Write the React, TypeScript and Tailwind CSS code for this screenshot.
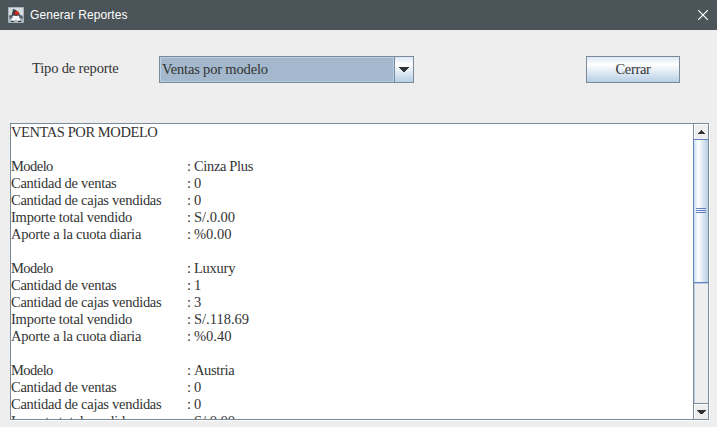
import React from 'react';

type Row = { label: string; value: string; labelClass: string; valueClass: string };

const L = {
  modelo: { label: 'Modelo', labelClass: 'tracking-[-0.55px]' },
  ventas: { label: 'Cantidad de ventas', labelClass: 'tracking-[-0.27px]' },
  cajas: { label: 'Cantidad de cajas vendidas', labelClass: 'tracking-[-0.27px]' },
  importe: { label: 'Importe total vendido', labelClass: 'tracking-[-0.22px]' },
  aporte: { label: 'Aporte a la cuota diaria', labelClass: 'tracking-[-0.25px]' },
};

const groups: Row[][] = [
  [
    { ...L.modelo, value: 'Cinza Plus', valueClass: 'tracking-[-0.35px]' },
    { ...L.ventas, value: '0', valueClass: '' },
    { ...L.cajas, value: '0', valueClass: '' },
    { ...L.importe, value: 'S/.0.00', valueClass: '' },
    { ...L.aporte, value: '%0.00', valueClass: '' },
  ],
  [
    { ...L.modelo, value: 'Luxury', valueClass: 'tracking-[-0.25px]' },
    { ...L.ventas, value: '1', valueClass: '' },
    { ...L.cajas, value: '3', valueClass: '' },
    { ...L.importe, value: 'S/.118.69', valueClass: '' },
    { ...L.aporte, value: '%0.40', valueClass: '' },
  ],
  [
    { ...L.modelo, value: 'Austria', valueClass: 'tracking-[-0.35px]' },
    { ...L.ventas, value: '0', valueClass: '' },
    { ...L.cajas, value: '0', valueClass: '' },
    { ...L.importe, value: 'S/.0.00', valueClass: '' },
  ],
];

function DukeIcon() {
  return (
    <svg width="16" height="16" viewBox="0 0 16 16">
      <rect width="16" height="16" rx="1" fill="#aab4bd" />
      <rect x="1" y="1" width="14" height="7" fill="#d3dae0" />
      <path d="M5 2 L8 3 L11 6 L12.5 9 L12 11 H4 L4 7 Z" fill="#3a4046" />
      <path d="M1 9 L4 7.5 L5 10 L2 12 Z M12 8 L15 9.5 L14.5 12 L12 11 Z" fill="#5c656d" />
      <path d="M5 8.5 L8 9 L11 8.5 L12 13 L10 14 L8 12.5 L5 14 L3.5 13 Z" fill="#f6f7f8" />
      <path d="M3 14 H6 V15 H3 Z M10 14 H13 V15 H10 Z" fill="#2a2f34" />
      <circle cx="8.7" cy="6" r="2.1" fill="#d8251d" />
    </svg>
  );
}

function Arrow({ up }: { up?: boolean }) {
  return (
    <svg width="9" height="4" viewBox="0 0 9 4" shapeRendering="crispEdges" fill="#333333">
      {up ? (
        <path d="M4 0h1v1h1v1h1v1h1v1H1V3h1V2h1V1h1z" />
      ) : (
        <path d="M0 0h9v1h-1v1h-1v1h-1v1H3V3H2V2H1V1H0z" />
      )}
    </svg>
  );
}

export default function App() {
  return (
    <div className="flex h-[427px] w-[717px] flex-col overflow-hidden bg-[#eeeeee] font-['Liberation_Serif',serif] text-[14.5px] leading-[17px] text-[#333333]">
      <header className="flex h-[30px] shrink-0 items-center bg-[#4b5459] pr-[9px] pl-2 font-['Liberation_Sans',sans-serif] text-[12px] text-white">
        <DukeIcon />
        <span className="ml-[6px] tracking-[0.1px]">Generar Reportes</span>
        <svg className="ml-auto" width="10" height="10" viewBox="0 0 10 10" stroke="#ffffff" strokeWidth="1.2">
          <path d="M0 0L10 10M10 0L0 10" />
        </svg>
      </header>

      <div className="flex h-[93px] shrink-0 items-start pr-[37px] pl-8 pt-[26px]">
        <label className="mt-[4px] w-[127px] whitespace-nowrap tracking-[-0.15px]">Tipo de reporte</label>
        <div className="flex h-[27px] w-[255px] border border-[#7a8a99]">
          <div className="flex flex-1 items-center border border-[#b8cfe5] bg-[#a3b8cc] pl-px tracking-[-0.17px]">
            Ventas por modelo
          </div>
          <div className="flex w-[19px] items-center justify-center border-l border-[#7a8a99] bg-linear-to-b from-[#dde8f3] via-white via-30% to-[#b8cfe5]">
            <svg width="10" height="5" viewBox="0 0 10 5" shapeRendering="crispEdges" fill="#333333">
              <path d="M0 0h10v1h-1v1h-1v1h-1v1h-1v1H4V4H3V3H2V2H1V1H0z" />
            </svg>
          </div>
        </div>
        <button className="ml-auto flex h-[27px] w-[94px] items-center justify-center border border-[#7a8a99] bg-linear-to-b from-[#dde8f3] via-white via-30% to-[#b8cfe5] tracking-[-0.3px]">
          Cerrar
        </button>
      </div>

      <div className="ml-[10px] h-[298px] w-[700px] border-r border-b border-white">
        <div className="flex h-[297px] border border-[#7a8a99] bg-white">
          <div className="h-[295px] flex-1 overflow-hidden whitespace-nowrap">
            <div className="h-[34px] tracking-[-0.42px]">VENTAS POR MODELO</div>
            {groups.map((rows, i) => (
              <div key={i} className="mb-[17px]">
                {rows.map((r) => (
                  <div key={r.label} className="flex h-[17px]">
                    <span className="w-[176px]">
                      <span className={r.labelClass}>{r.label}</span>
                    </span>
                    <span className="w-[7px]">:</span>
                    <span className={r.valueClass}>{r.value}</span>
                  </div>
                ))}
              </div>
            ))}
          </div>
          <div className="flex w-[15px] flex-col border-l border-[#7a8a99] bg-[#eeeeee]">
            <div className="flex h-[15px] shrink-0 items-center justify-center border-t border-l border-white">
              <Arrow up />
            </div>
            <div className="-ml-px flex h-[144px] shrink-0 items-center justify-center border-y border-l border-[#6382bf] bg-linear-to-r from-[#c8ddf2] via-white via-30% to-[#b8cfe5]">
              <div className="flex h-[6px] w-[10px] flex-col gap-px">
                <div className="h-px bg-[#6382bf]" />
                <div className="h-px bg-[#6382bf]" />
                <div className="h-px bg-[#6382bf]" />
              </div>
            </div>
            <div className="flex-1 border-t border-l border-[#b8cfe5]" />
            <div className="flex h-[16px] shrink-0 items-center justify-center border-t border-[#7a8a99] shadow-[inset_1px_1px_0_#ffffff]">
              <Arrow />
            </div>
          </div>
        </div>
      </div>
    </div>
  );
}
